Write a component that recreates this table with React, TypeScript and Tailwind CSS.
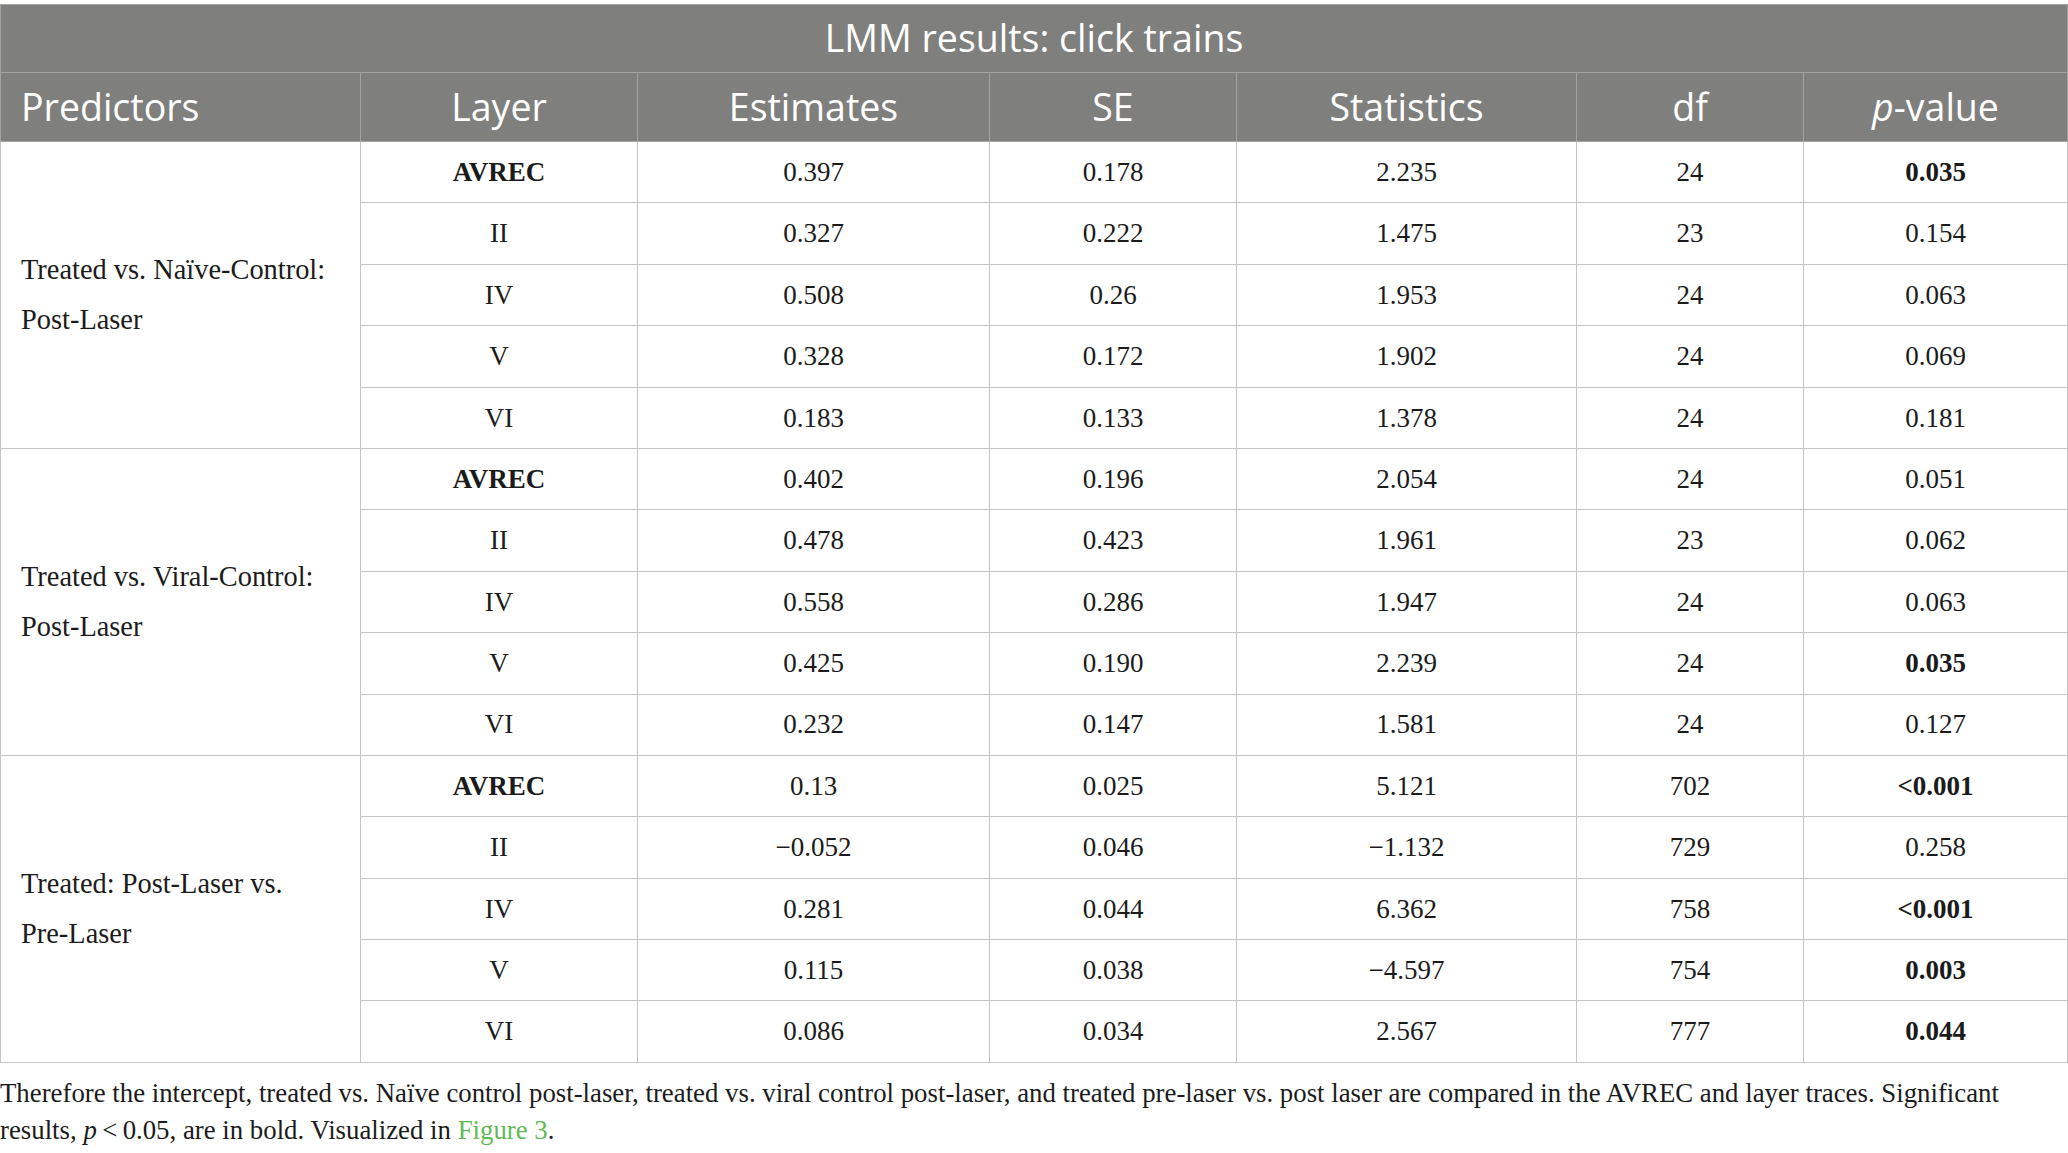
type Row = {
  layer: string;
  est: string;
  se: string;
  stat: string;
  df: string;
  p: string;
  pBold?: boolean;
};

type Group = { label: [string, string]; rows: Row[] };

const groups: Group[] = [
  {
    label: ["Treated vs. Naïve-Control:", "Post-Laser"],
    rows: [
      { layer: "AVREC", est: "0.397", se: "0.178", stat: "2.235", df: "24", p: "0.035", pBold: true },
      { layer: "II", est: "0.327", se: "0.222", stat: "1.475", df: "23", p: "0.154" },
      { layer: "IV", est: "0.508", se: "0.26", stat: "1.953", df: "24", p: "0.063" },
      { layer: "V", est: "0.328", se: "0.172", stat: "1.902", df: "24", p: "0.069" },
      { layer: "VI", est: "0.183", se: "0.133", stat: "1.378", df: "24", p: "0.181" },
    ],
  },
  {
    label: ["Treated vs. Viral-Control:", "Post-Laser"],
    rows: [
      { layer: "AVREC", est: "0.402", se: "0.196", stat: "2.054", df: "24", p: "0.051" },
      { layer: "II", est: "0.478", se: "0.423", stat: "1.961", df: "23", p: "0.062" },
      { layer: "IV", est: "0.558", se: "0.286", stat: "1.947", df: "24", p: "0.063" },
      { layer: "V", est: "0.425", se: "0.190", stat: "2.239", df: "24", p: "0.035", pBold: true },
      { layer: "VI", est: "0.232", se: "0.147", stat: "1.581", df: "24", p: "0.127" },
    ],
  },
  {
    label: ["Treated: Post-Laser vs.", "Pre-Laser"],
    rows: [
      { layer: "AVREC", est: "0.13", se: "0.025", stat: "5.121", df: "702", p: "<0.001", pBold: true },
      { layer: "II", est: "\u22120.052", se: "0.046", stat: "\u22121.132", df: "729", p: "0.258" },
      { layer: "IV", est: "0.281", se: "0.044", stat: "6.362", df: "758", p: "<0.001", pBold: true },
      { layer: "V", est: "0.115", se: "0.038", stat: "\u22124.597", df: "754", p: "0.003", pBold: true },
      { layer: "VI", est: "0.086", se: "0.034", stat: "2.567", df: "777", p: "0.044", pBold: true },
    ],
  },
];

const head = "border border-[#a3a4a2] font-['Open_Sans',sans-serif] text-[37.5px] font-normal text-white";
const cell = "h-[61.4px] border border-[#c4c4c4] p-0 text-center align-middle";

export default function App() {
  return (
    <div className="min-h-screen w-[2068px] bg-white pt-[4px] font-['Liberation_Serif',serif] text-[27px] text-[#1b1b1b]">
      <table className="w-[2067px] table-fixed border-collapse">
        <colgroup>
          <col className="w-[360px]" />
          <col className="w-[277px]" />
          <col className="w-[352px]" />
          <col className="w-[247px]" />
          <col className="w-[340px]" />
          <col className="w-[227px]" />
          <col className="w-[264px]" />
        </colgroup>
        <thead className="bg-[#7f807e]">
          <tr className="h-[68px]">
            <th colSpan={7} className={`${head} text-center`}>
              LMM results: click trains
            </th>
          </tr>
          <tr className="h-[69px]">
            <th className={`${head} pl-[20px] text-left`}>Predictors</th>
            <th className={head}>Layer</th>
            <th className={head}>Estimates</th>
            <th className={head}>SE</th>
            <th className={head}>Statistics</th>
            <th className={head}>df</th>
            <th className={head}>
              <i>p</i>-value
            </th>
          </tr>
        </thead>
        <tbody>
          {groups.map((g) =>
            g.rows.map((r, i) => (
              <tr key={g.label[0] + r.layer}>
                {i === 0 && (
                  <td
                    rowSpan={5}
                    className="border border-[#c4c4c4] pl-[20px] text-left align-middle text-[28.4px] leading-[50px]"
                  >
                    {g.label[0]}
                    <br />
                    {g.label[1]}
                  </td>
                )}
                <td className={`${cell} ${r.layer === "AVREC" ? "font-bold" : ""}`}>{r.layer}</td>
                <td className={cell}>{r.est}</td>
                <td className={cell}>{r.se}</td>
                <td className={cell}>{r.stat}</td>
                <td className={cell}>{r.df}</td>
                <td className={`${cell} ${r.pBold ? "font-bold" : ""}`}>{r.p}</td>
              </tr>
            ))
          )}
        </tbody>
      </table>
      <p className="mt-[12px] text-[26.8px] leading-[37px]">
        Therefore the intercept, treated vs. Naïve control post-laser, treated vs. viral control post-laser, and
        treated pre-laser vs. post laser are compared in the AVREC and layer traces. Significant
        <br />
        results, <i>p</i>{"\u2009<\u2009"}0.05, are in bold. Visualized in{" "}
        <a className="text-[#5fba55]">Figure 3</a>.
      </p>
    </div>
  );
}
